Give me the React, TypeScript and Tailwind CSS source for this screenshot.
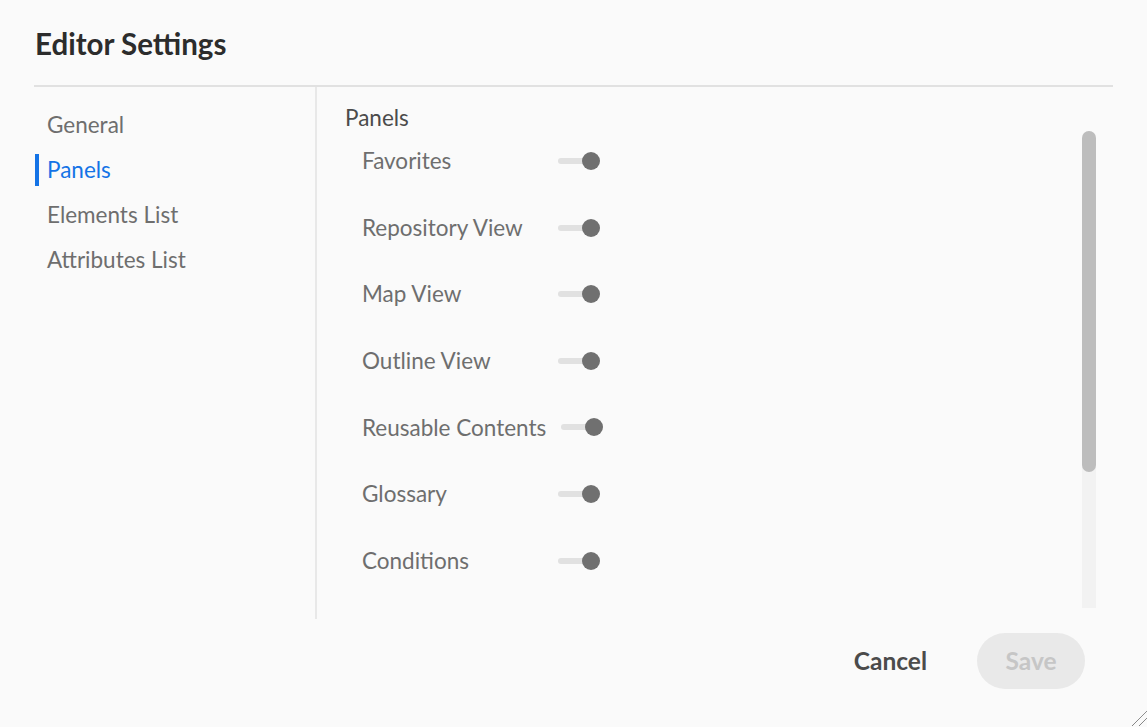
import { useState } from "react";

// Editor Settings dialog — left nav with sections, right pane with panel toggles.

const NAV_ITEMS = ["General", "Panels", "Elements List", "Attributes List"];

const PANELS = [
  "Favorites",
  "Repository View",
  "Map View",
  "Outline View",
  "Reusable Contents",
  "Glossary",
  "Conditions",
];

function Toggle({ on, onClick }: { on: boolean; onClick: () => void }) {
  return (
    <button
      onClick={onClick}
      className="relative flex h-[20px] w-[42px] shrink-0 items-center"
      aria-pressed={on}
    >
      <span className="h-[6px] w-[40px] rounded-full bg-[#e1e1e1]" />
      <span
        className={
          "absolute top-px h-[18px] w-[18px] rounded-full bg-[#707070] " +
          (on ? "left-[24px]" : "left-0")
        }
      />
    </button>
  );
}

export default function App() {
  const [active, setActive] = useState("Panels");
  const [enabled, setEnabled] = useState<Record<string, boolean>>(
    Object.fromEntries(PANELS.map((p) => [p, true]))
  );

  return (
    <div
      className="relative flex h-[727px] w-full flex-col bg-[#fafafa]"
      style={{ fontFamily: "Lato, 'Open Sans', sans-serif" }}
    >
      {/* Header */}
      <div className="px-[35px] pt-[26px] pb-[23px]">
        <h1 className="text-[29.5px] font-bold leading-[36px] text-[#2c2c2c]">
          Editor Settings
        </h1>
      </div>
      <div className="mx-[34px] h-[2px] bg-[#e1e1e1]" />

      {/* Body */}
      <div className="flex h-[532px]">
        <nav className="flex w-[317px] shrink-0 flex-col gap-[13px] border-r-2 border-[#e8e8e8] pl-[35px] pt-[22px]">
          {NAV_ITEMS.map((item) => {
            const isActive = item === active;
            return (
              <button
                key={item}
                onClick={() => setActive(item)}
                className={
                  "flex h-[32px] items-center border-l-4 pl-[8px] text-left text-[22.5px] " +
                  (isActive
                    ? "border-[#1473e6] text-[#1473e6]"
                    : "border-transparent text-[#6e6e6e]")
                }
              >
                {item}
              </button>
            );
          })}
        </nav>

        <div className="flex flex-1 pl-[28px] pr-[51px]">
          <div className="flex-1 pt-[16px]">
            <h2 className="text-[22.5px] leading-[30px] text-[#4b4b4b]">Panels</h2>
            <ul className="flex flex-col gap-[34.6px] pl-[17px] pt-[12px]">
              {PANELS.map((p) => (
                <li key={p} className="flex h-[32px] items-center gap-[15px]">
                  <span className="min-w-[181px] text-[22.5px] text-[#6e6e6e]">{p}</span>
                  <Toggle
                    on={enabled[p]}
                    onClick={() => setEnabled({ ...enabled, [p]: !enabled[p] })}
                  />
                </li>
              ))}
            </ul>
          </div>

          {/* Scrollbar */}
          <div className="mt-[44px] mb-[11px] flex w-[14px] flex-col rounded-t-full bg-[#f2f2f2]">
            <div className="h-[341px] rounded-full bg-[#bdbdbd]" />
          </div>
        </div>
      </div>

      {/* Footer */}
      <div className="flex items-center justify-end gap-[50px] pr-[62px] pt-[14px]">
        <button className="text-[24.5px] font-bold text-[#4b4b4b]">Cancel</button>
        <button className="h-[56px] w-[108px] rounded-full bg-[#e9e9e9] text-[24.5px] font-bold text-[#c6c6c6]">
          Save
        </button>
      </div>

      {/* Resize grip */}
      <svg
        className="absolute bottom-0 right-0"
        width="16"
        height="17"
        viewBox="0 0 16 17"
      >
        <line x1="1" y1="16" x2="16" y2="1" stroke="#555" strokeWidth="1" strokeDasharray="1 0.4" />
        <line x1="8" y1="16" x2="16" y2="8" stroke="#555" strokeWidth="1" strokeDasharray="1 0.4" />
      </svg>
    </div>
  );
}
